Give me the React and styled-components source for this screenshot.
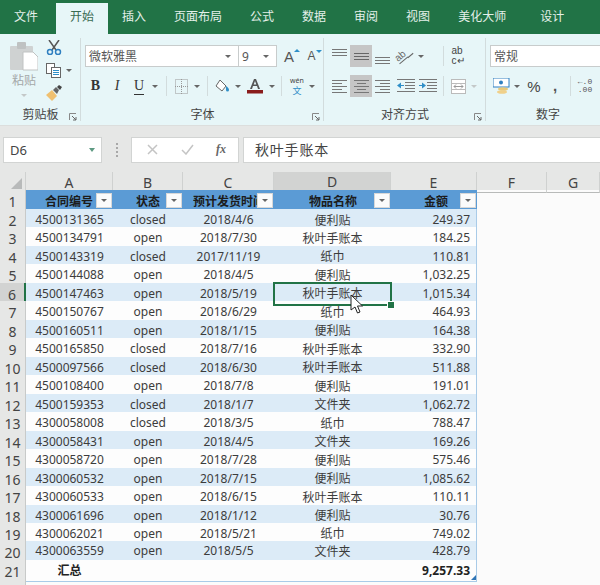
import React from 'react';
import styled, { createGlobalStyle } from 'styled-components';

const GlobalStyle = createGlobalStyle`
  html, body { margin: 0; padding: 0; background: #fbfbfb; }
  #root { width: 600px; height: 585px; overflow: hidden; }
  * { box-sizing: border-box; }
`;

const FONT = '"Noto Sans", "Noto Sans CJK SC", sans-serif';

const Page = styled.div`
  width: 600px;
  height: 585px;
  overflow: hidden;
  display: flex;
  flex-direction: column;
  font-family: ${FONT};
  color: #333;
`;

/* tabs */
const TabBar = styled.div`
  flex: 0 0 34px;
  display: flex;
  align-items: stretch;
  background: #217346;
  padding-top: 3px;
`;
const Tab = styled.div`
  padding: 0 14px;
  margin-left: ${(p) => p.$gap || 0}px;
  font-size: 12px;
  line-height: 28px;
  white-space: nowrap;
  color: ${(p) => (p.$active ? '#3a6b52' : '#e4f0ea')};
  background: ${(p) => (p.$active ? '#e7f6f8' : 'transparent')};
`;
const TabHint = styled.div`
  margin-left: 24px;
  padding-top: 7px;
`;

/* ribbon */
const Ribbon = styled.div`
  flex: 0 0 91px;
  display: flex;
  background: #e7f6f8;
  overflow: hidden;
`;
const Group = styled.div`
  position: relative;
  flex: 0 0 ${(p) => p.$w}px;
  display: flex;
  flex-direction: column;
  padding: 11px 0 0 ${(p) => p.$pad || 0}px;
  &::after {
    content: '';
    position: absolute;
    right: 0;
    top: 4px;
    bottom: 4px;
    width: 1px;
    background: ${(p) => (p.$last ? 'transparent' : '#d2dcdd')};
  }
`;
const Rows = styled.div`
  display: flex;
  flex-direction: column;
  gap: 8px;
`;
const ToolRow = styled.div`
  display: flex;
  align-items: center;
  height: 22px;
`;
const Cell = styled.div`
  flex: 0 0 ${(p) => p.$w}px;
  height: 22px;
  display: flex;
  align-items: center;
  justify-content: center;
  background: ${(p) => (p.$on ? '#c6c6c6' : 'transparent')};
`;
const Caret = styled.span`
  width: 0;
  height: 0;
  border-left: 3px solid transparent;
  border-right: 3px solid transparent;
  border-top: 3px solid ${(p) => (p.$faint ? '#c4c8c8' : '#666')};
`;
const Sep = styled.span`
  width: 1px;
  height: 20px;
  background: #d2dcdd;
`;
const Combo = styled.div`
  flex: 0 0 ${(p) => p.$w}px;
  height: 22px;
  display: flex;
  align-items: center;
  justify-content: space-between;
  padding: 0 7px 0 3px;
  background: #fff;
  border: 1px solid #c8cccc;
  margin-left: ${(p) => (p.$join ? -1 : 0)}px;
  font-size: 12px;
  color: #555;
`;
const GroupLabel = styled.div`
  position: absolute;
  left: 0;
  right: 0;
  bottom: 1px;
  height: 18px;
  font-size: 12px;
  line-height: 18px;
  text-align: center;
  color: #444;
`;
const Launcher = styled.svg`
  position: absolute;
  right: 4px;
  bottom: 4px;
`;
const GrowA = styled.span`
  position: relative;
  font-family: "Liberation Sans", sans-serif;
  font-size: ${(p) => p.$size}px;
  color: #555;
`;
const GrowMark = styled.span`
  position: absolute;
  right: -6px;
  top: 1px;
  width: 0;
  height: 0;
  border-left: 3px solid transparent;
  border-right: 3px solid transparent;
  ${(p) => (p.$down ? 'border-top: 3px solid #2f8fc8;' : 'border-bottom: 3px solid #2f8fc8;')}
`;
const StyleLetter = styled.span`
  font-family: "Liberation Serif", "Liberation Sans", sans-serif;
  font-size: 14px;
  line-height: 16px;
  color: #333;
  font-weight: ${(p) => (p.$bold ? 700 : 400)};
  font-style: ${(p) => (p.$italic ? 'italic' : 'normal')};
  border-bottom: ${(p) => (p.$under ? '1.5px solid #333' : 'none')};
`;
const PasteCol = styled.div`
  flex: 0 0 43px;
  display: flex;
  flex-direction: column;
  align-items: center;
  padding: 0 0 0 5px;
`;
const PasteText = styled.div`
  font-size: 12px;
  line-height: 16px;
  margin-top: 2px;
  margin-bottom: 5px;
  color: #a4a8a8;
`;
const ClipBody = styled.div`
  display: flex;
  margin-top: -3px;
`;
const ClipTools = styled.div`
  display: flex;
  flex-direction: column;
  gap: 7px;
  margin-top: -3px;
`;
const ClipTool = styled.div`
  display: flex;
  align-items: center;
  gap: 5px;
  height: 16px;
  padding-left: 3px;
`;
const Wen = styled.span`
  display: flex;
  flex-direction: column;
  align-items: center;
  line-height: 9px;
  font-size: 7px;
  color: #444;
  & > b { font-weight: 400; font-size: 9px; color: #2f8fc8; line-height: 11px; }
`;
const WrapText = styled.span`
  display: flex;
  flex-direction: column;
  font-family: "Liberation Sans", sans-serif;
  font-size: 10px;
  line-height: 10px;
  color: #444;
`;
const OrientText = styled.span`
  display: inline-block;
  font-family: "Liberation Sans", sans-serif;
  font-size: 10px;
  line-height: 10px;
  color: #666;
  border-bottom: 1px solid #666;
  transform: rotate(-40deg);
`;
const OrientArrow = styled.span`
  width: 7px;
  height: 1px;
  margin: 0 0 2px 1px;
  background: #666;
  transform: rotate(-40deg);
`;
const Percent = styled.span`
  font-family: "Liberation Sans", sans-serif;
  font-size: 15px;
  color: #444;
`;
const Comma = styled.span`
  font-family: "Liberation Sans", sans-serif;
  font-size: 15px;
  font-weight: 700;
  line-height: 10px;
  color: #555;
`;
const Decimal = styled.span`
  display: flex;
  flex-direction: column;
  align-items: flex-end;
  font-family: "Liberation Mono", monospace;
  font-size: 8px;
  line-height: 8px;
  color: #555;
`;

/* formula bar */
const FormulaBar = styled.div`
  flex: 0 0 47px;
  display: flex;
  align-items: center;
  padding: 1px 0 0 3px;
  background: #e6e7e6;
  border-top: 1px solid #dcdedd;
`;
const NameBox = styled.div`
  flex: 0 0 99px;
  height: 26px;
  display: flex;
  align-items: center;
  justify-content: space-between;
  padding: 0 6px;
  background: #fff;
  border: 1px solid #d2d4d3;
  font-size: 13px;
  color: #444;
`;
const NameCaret = styled.span`
  width: 0;
  height: 0;
  border-left: 3px solid transparent;
  border-right: 3px solid transparent;
  border-top: 4px solid #5d9a82;
`;
const Grip = styled.div`
  flex: 0 0 29px;
  display: flex;
  flex-direction: column;
  align-items: center;
  gap: 2px;
  & > i { width: 2px; height: 2px; background: #a8a8a8; }
`;
const FxBox = styled.div`
  flex: 0 0 106px;
  height: 26px;
  display: grid;
  grid-template-columns: 36px 34px 34px;
  align-items: center;
  justify-items: center;
  padding-left: 2px;
  background: #fff;
  border: 1px solid #d2d4d3;
`;
const FxText = styled.span`
  font-family: "Liberation Serif", serif;
  font-style: italic;
  font-weight: 700;
  font-size: 12px;
  color: #666;
`;
const FormulaInput = styled.div`
  flex: 1;
  height: 26px;
  margin-left: 4px;
  padding-left: 11px;
  background: #fff;
  border: 1px solid #d2d4d3;
  border-right: none;
  font-size: 14px;
  letter-spacing: 0.8px;
  line-height: 23px;
  color: #444;
`;

/* sheet */
const COLS = '26px 87px 70px 91px 117px 86px 70px 53px';
const Sheet = styled.div`
  position: relative;
  flex: 1;
  overflow: hidden;
  background: #fbfbfb;
`;
const HeadRow = styled.div`
  display: grid;
  grid-template-columns: ${COLS};
  height: 18px;
  background: #e6e7e6;
`;
const Corner = styled.div`
  display: flex;
  align-items: flex-end;
  justify-content: flex-end;
  padding: 0 3px 3px 0;
  border-right: 1px solid #cfd1d0;
  border-bottom: 1px solid #b8bab9;
`;
const ColHead = styled.div`
  display: flex;
  align-items: center;
  justify-content: center;
  font-size: 14px;
  color: #444;
  background: ${(p) => (p.$on ? '#d2d3d2' : 'transparent')};
  border-right: 1px solid #cfd1d0;
  border-bottom: ${(p) => (p.$on ? '2px solid #217346' : '1px solid #b8bab9')};
`;
const Row = styled.div`
  display: grid;
  grid-template-columns: ${COLS};
  height: ${(p) => p.$h || 18.47}px;
`;
const RowHead = styled.div`
  display: flex;
  align-items: center;
  justify-content: center;
  padding-top: 2px;
  font-size: 14px;
  color: #444;
  background: ${(p) => (p.$on ? '#d2d3d2' : '#e6e7e6')};
  border-right: ${(p) => (p.$on ? '2px solid #217346' : '1px solid #c8cac9')};
  border-bottom: 1px solid #cfd1d0;
`;
const Td = styled.div`
  position: relative;
  display: flex;
  align-items: center;
  justify-content: ${(p) => (p.$right ? 'flex-end' : 'center')};
  padding-right: ${(p) => (p.$right ? 6 : 0)}px;
  font-size: 12px;
  font-weight: ${(p) => (p.$bold ? 700 : 400)};
  white-space: nowrap;
  color: ${(p) => (p.$bold ? '#222' : '#3c3c3c')};
  background: ${(p) => (p.$band ? '#dcebf7' : '#fdfdfd')};
  border-bottom: 1px solid #a9cbe8;
  ${(p) => p.$right && 'border-right: 1px solid #a9cbe8;'}
  ${(p) => p.$double && 'border-bottom: 3px double #8fbbe2;'}
`;
const Th = styled.div`
  display: flex;
  align-items: center;
  overflow: hidden;
  padding-left: ${(p) => p.$pad}px;
  padding-right: 1px;
  background: #5b9bd5;
  font-size: 12px;
  font-weight: 700;
  white-space: nowrap;
  color: #1c1c1c;
  border-bottom: 1px solid #a9cbe8;
`;
const ThText = styled.span`
  flex: 1;
  min-width: 0;
  overflow: hidden;
`;
const Filter = styled.span`
  flex: 0 0 16px;
  height: 15px;
  display: flex;
  align-items: center;
  justify-content: center;
  background: #fbfbfb;
  border: 1px solid #d8d8d8;
`;
const Selection = styled.div`
  position: absolute;
  left: -1px;
  right: -1px;
  top: -1px;
  bottom: -2px;
  border: 2px solid #217346;
  z-index: 2;
  &::after {
    content: '';
    position: absolute;
    right: -4px;
    bottom: -4px;
    width: 6px;
    height: 6px;
    background: #217346;
    outline: 1px solid #fff;
  }
`;
const Pointer = styled.svg`
  position: absolute;
  left: 76px;
  top: 11px;
  z-index: 3;
`;
const ResizeMark = styled.span`
  position: absolute;
  right: 0;
  bottom: 1px;
  width: 0;
  height: 0;
  border-left: 5px solid transparent;
  border-bottom: 5px solid #2f75b5;
`;

const Lines = ({ ys, xs, w = 15, color = '#777', h = 16 }) => (
  <svg width={w} height={h} viewBox={`0 0 ${w} ${h}`}>
    {ys.map((y, i) => (
      <rect key={y} x={xs ? xs[i % xs.length][0] : 0} y={y} width={xs ? xs[i % xs.length][1] : w} height="1" fill={color} />
    ))}
  </svg>
);

const ParaIcon = ({ mode }) => {
  const long = [0, 15];
  const variants = {
    left: [long, [0, 10]],
    center: [long, [3, 9]],
    right: [long, [5, 10]],
  };
  return <Lines ys={[2, 5, 8, 11, 14]} xs={variants[mode]} />;
};

const IndentIcon = ({ flip }) => (
  <svg width="18" height="14" viewBox="0 0 18 14">
    <g fill="#777">
      <rect x="0" y="0" width="18" height="1" />
      <rect x="8" y="3" width="10" height="1" />
      <rect x="8" y="6" width="10" height="1" />
      <rect x="8" y="9" width="10" height="1" />
      <rect x="0" y="12" width="18" height="1" />
    </g>
    <path d={flip ? 'M0 6h3V3.5L7 6.500 3 9.500V7H0z' : 'M7 6H4V3.500L0 6.500 4 9.500V7h3z'} fill="#2f8fc8" />
  </svg>
);

const PasteIcon = () => (
  <svg width="28" height="29" viewBox="0 0 28 29">
    <rect x="0" y="4" width="23" height="24" rx="1" fill="#cfd2d2" />
    <rect x="7" y="0" width="9" height="7" rx="1" fill="#bfc2c2" />
    <path d="M13 10h10l5 5v13H13z" fill="#fff" stroke="#c0c3c3" />
  </svg>
);

const ScissorsIcon = () => (
  <svg width="16" height="15" viewBox="0 0 16 15">
    <path d="M3 0l7 10M13 0L6 10" stroke="#555" strokeWidth="1.500" fill="none" />
    <circle cx="4" cy="12" r="2.500" fill="none" stroke="#2f7fc0" strokeWidth="1.500" />
    <circle cx="12" cy="12" r="2.500" fill="none" stroke="#2f7fc0" strokeWidth="1.500" />
  </svg>
);

const CopyIcon = () => (
  <svg width="15" height="15" viewBox="0 0 15 15">
    <rect x="0.500" y="0.500" width="8" height="10" fill="#fff" stroke="#666" />
    <rect x="5.500" y="4.500" width="9" height="10" fill="#fff" stroke="#666" />
    <path d="M7 7.500h6M7 9.500h6M7 11.500h6" stroke="#2f8fc8" />
  </svg>
);

const BrushIcon = () => (
  <svg width="16" height="16" viewBox="0 0 16 16">
    <path d="M0 10l6-5 5 6-5 5z" fill="#f0c070" />
    <path d="M7 5l3-3 3 3-2 4z" fill="#666" />
    <path d="M11 2l2-2 3 2-2 3z" fill="#444" />
  </svg>
);

const BorderIcon = () => (
  <svg width="13" height="15" viewBox="0 0 13 15">
    <rect x="0.500" y="0.500" width="12" height="14" fill="none" stroke="#999" strokeDasharray="1 1" />
    <path d="M6.500 0v15M0 7.500h13" stroke="#999" strokeDasharray="1 1" />
  </svg>
);

const BucketIcon = () => (
  <svg width="15" height="14" viewBox="0 0 15 14">
    <path d="M5 1l6 6-4 5L1 7z" fill="#fff" stroke="#666" />
    <path d="M11 7c2 1 3 3 3 4a1.500 1.500 0 0 1-3 0z" fill="#2f8fc8" />
  </svg>
);

const FontColorIcon = () => (
  <svg width="16" height="15" viewBox="0 0 16 15">
    <path d="M3 10L7 0h2l4 10h-2l-1-3H6l-1 3zM6.700 5.500h2.600L8 2z" fill="#555" />
    <rect x="0" y="11" width="16" height="3.500" fill="#8a1c1c" />
  </svg>
);

const MergeIcon = () => (
  <svg width="15" height="15" viewBox="0 0 15 15">
    <rect x="0.500" y="0.500" width="14" height="14" fill="#fff" stroke="#bbb" />
    <path d="M0 4.500h15M0 10.500h15" stroke="#bbb" />
    <path d="M3 7.500h9M3 7.500l2-2M3 7.500l2 2M12 7.500l-2-2M12 7.500l-2 2" stroke="#999" fill="none" />
  </svg>
);

const CurrencyIcon = () => (
  <svg width="17" height="17" viewBox="0 0 17 17">
    <rect x="0" y="0" width="16" height="9" fill="#fff" stroke="#2f7fc0" />
    <circle cx="8" cy="4.500" r="2" fill="#2f7fc0" />
    <ellipse cx="10" cy="11" rx="5" ry="1.800" fill="#e8c878" />
    <ellipse cx="9" cy="14" rx="5" ry="1.800" fill="#f0d08a" />
  </svg>
);

const CornerMark = () => (
  <svg width="11" height="11" viewBox="0 0 11 11">
    <path d="M11 0v11H0z" fill="#b8baba" />
  </svg>
);

const LauncherIcon = () => (
  <Launcher width="8" height="8" viewBox="0 0 8 8">
    <path d="M0.500 7V0.500H7" fill="none" stroke="#888" />
    <path d="M3 3l4 4M7 4v3H4" fill="none" stroke="#666" />
  </Launcher>
);

const BulbIcon = () => (
  <svg width="12" height="17" viewBox="0 0 12 17">
    <path d="M6 1a5 5 0 0 0-3 9v3h6v-3a5 5 0 0 0-3-9zM4 15h4" fill="none" stroke="#dcebe4" />
  </svg>
);

const FilterButton = () => (
  <Filter><Caret /></Filter>
);

const rows = [
  ['4500131365', 'closed', '2018/4/6', '便利贴', '249.37'],
  ['4500134791', 'open', '2018/7/30', '秋叶手账本', '184.25'],
  ['4500143319', 'closed', '2017/11/19', '纸巾', '110.81'],
  ['4500144088', 'open', '2018/4/5', '便利贴', '1,032.25'],
  ['4500147463', 'open', '2018/5/19', '秋叶手账本', '1,015.34'],
  ['4500150767', 'open', '2018/6/29', '纸巾', '464.93'],
  ['4500160511', 'open', '2018/1/15', '便利贴', '164.38'],
  ['4500165850', 'closed', '2018/7/16', '秋叶手账本', '332.90'],
  ['4500097566', 'closed', '2018/6/30', '秋叶手账本', '511.88'],
  ['4500108400', 'open', '2018/7/8', '便利贴', '191.01'],
  ['4500159353', 'closed', '2018/1/7', '文件夹', '1,062.72'],
  ['4300058008', 'closed', '2018/3/5', '纸巾', '788.47'],
  ['4300058431', 'open', '2018/4/5', '文件夹', '169.26'],
  ['4300058720', 'open', '2018/7/28', '便利贴', '575.46'],
  ['4300060532', 'open', '2018/7/15', '便利贴', '1,085.62'],
  ['4300060533', 'open', '2018/6/15', '秋叶手账本', '110.11'],
  ['4300061696', 'open', '2018/1/12', '便利贴', '30.76'],
  ['4300062021', 'open', '2018/5/21', '纸巾', '749.02'],
  ['4300063559', 'open', '2018/5/5', '文件夹', '428.79'],
];

const tabs = ['开始', '插入', '页面布局', '公式', '数据', '审阅', '视图', '美化大师'];

const App = () => (
  <Page>
    <GlobalStyle />
    <TabBar>
      <Tab>文件</Tab>
      {tabs.map((t, i) => (
        <Tab key={t} $active={i === 0} $gap={i === 0 ? 4 : 0}>{t}</Tab>
      ))}
      <Tab $gap={6}>设计</Tab>
      <TabHint><BulbIcon /></TabHint>
    </TabBar>

    <Ribbon>
      <Group $w={81}>
        <ClipBody>
          <PasteCol>
            <PasteIcon />
            <PasteText>粘贴</PasteText>
            <Caret $faint />
          </PasteCol>
          <ClipTools>
            <ClipTool><ScissorsIcon /></ClipTool>
            <ClipTool><CopyIcon /><Caret /></ClipTool>
            <ClipTool><BrushIcon /></ClipTool>
          </ClipTools>
        </ClipBody>
        <GroupLabel>剪贴板</GroupLabel>
        <LauncherIcon />
      </Group>

      <Group $w={243} $pad={4}>
        <Rows>
          <ToolRow>
            <Combo $w={154}>微软雅黑<Caret /></Combo>
            <Combo $w={39} $join>9<Caret /></Combo>
            <Cell $w={24}><GrowA $size={15}>A<GrowMark /></GrowA></Cell>
            <Cell $w={21}><GrowA $size={12}>A<GrowMark $down /></GrowA></Cell>
          </ToolRow>
          <ToolRow>
            <Cell $w={21}><StyleLetter $bold>B</StyleLetter></Cell>
            <Cell $w={22}><StyleLetter $italic>I</StyleLetter></Cell>
            <Cell $w={22}><StyleLetter $under>U</StyleLetter></Cell>
            <Cell $w={10}><Caret /></Cell>
            <Cell $w={12}><Sep /></Cell>
            <Cell $w={18}><BorderIcon /></Cell>
            <Cell $w={13}><Caret /></Cell>
            <Cell $w={8}><Sep /></Cell>
            <Cell $w={22}><BucketIcon /></Cell>
            <Cell $w={10}><Caret /></Cell>
            <Cell $w={24}><FontColorIcon /></Cell>
            <Cell $w={9}><Caret /></Cell>
            <Cell $w={10}><Sep /></Cell>
            <Cell $w={22}><Wen>wén<b>文</b></Wen></Cell>
            <Cell $w={8}><Caret /></Cell>
          </ToolRow>
        </Rows>
        <GroupLabel>字体</GroupLabel>
        <LauncherIcon />
      </Group>

      <Group $w={162} $pad={5}>
        <Rows>
          <ToolRow>
            <Cell $w={21}><Lines ys={[1, 4, 7]} h={16} /></Cell>
            <Cell $w={22} $on><Lines ys={[5, 8, 11]} color="#666" /></Cell>
            <Cell $w={21}><Lines ys={[9, 12, 15]} /></Cell>
            <Cell $w={23}><OrientText>ab</OrientText><OrientArrow /></Cell>
            <Cell $w={9}><Caret /></Cell>
            <Cell $w={15} />
            <Cell $w={6}><Sep /></Cell>
            <Cell $w={24}><WrapText>ab<span>c↵</span></WrapText></Cell>
          </ToolRow>
          <ToolRow>
            <Cell $w={21}><ParaIcon mode="left" /></Cell>
            <Cell $w={22} $on><ParaIcon mode="center" /></Cell>
            <Cell $w={21}><ParaIcon mode="right" /></Cell>
            <Cell $w={26}><IndentIcon /></Cell>
            <Cell $w={18}><IndentIcon flip /></Cell>
            <Cell $w={3} />
            <Cell $w={6}><Sep /></Cell>
            <Cell $w={24}><MergeIcon /></Cell>
            <Cell $w={8}><Caret $faint /></Cell>
          </ToolRow>
        </Rows>
        <GroupLabel>对齐方式</GroupLabel>
        <LauncherIcon />
      </Group>

      <Group $w={114} $pad={4} $last>
        <Rows>
          <ToolRow>
            <Combo $w={120}>常规</Combo>
          </ToolRow>
          <ToolRow>
            <Cell $w={22}><CurrencyIcon /></Cell>
            <Cell $w={10}><Caret /></Cell>
            <Cell $w={24}><Percent>%</Percent></Cell>
            <Cell $w={18}><Comma>,</Comma></Cell>
            <Cell $w={12}><Sep /></Cell>
            <Cell $w={18}><Decimal><span>←.0</span><span>.00</span></Decimal></Cell>
          </ToolRow>
        </Rows>
        <GroupLabel>数字</GroupLabel>
      </Group>
    </Ribbon>

    <FormulaBar>
      <NameBox>D6<NameCaret /></NameBox>
      <Grip><i /><i /><i /><i /></Grip>
      <FxBox>
        <svg width="11" height="11" viewBox="0 0 11 11"><path d="M1 1l9 9M10 1l-9 9" stroke="#c4c4c4" strokeWidth="1.500" /></svg>
        <svg width="13" height="11" viewBox="0 0 13 11"><path d="M1 6l4 4 7-9" stroke="#c4c4c4" strokeWidth="1.500" fill="none" /></svg>
        <FxText>fx</FxText>
      </FxBox>
      <FormulaInput>秋叶手账本</FormulaInput>
    </FormulaBar>

    <Sheet>
      <HeadRow>
        <Corner><CornerMark /></Corner>
        {['A', 'B', 'C', 'D', 'E', 'F', 'G'].map((c) => (
          <ColHead key={c} $on={c === 'D'}>{c}</ColHead>
        ))}
      </HeadRow>
      <Row $h={19}>
        <RowHead>1</RowHead>
        <Th $pad={19}><ThText>合同编号</ThText><FilterButton /></Th>
        <Th $pad={23}><ThText>状态</ThText><FilterButton /></Th>
        <Th $pad={10}><ThText>预计发货时间</ThText><FilterButton /></Th>
        <Th $pad={35}><ThText>物品名称</ThText><FilterButton /></Th>
        <Th $pad={33}><ThText>金额</ThText><FilterButton /></Th>
      </Row>
      {rows.map((r, i) => {
        const band = i % 2 === 0;
        const selected = i === 4;
        return (
          <Row key={r[0]}>
            <RowHead $on={selected}>{i + 2}</RowHead>
            <Td $band={band} $double={i === 18}>{r[0]}</Td>
            <Td $band={band} $double={i === 18}>{r[1]}</Td>
            <Td $band={band} $double={i === 18}>{r[2]}</Td>
            <Td $band={band} $double={i === 18}>
              {r[3]}
              {selected && <Selection />}
              {selected && (
                <Pointer width="13" height="20" viewBox="0 0 13 20">
                  <path d="M1 1v15l4-3 2.500 6 2.500-1-2.500-6h5z" fill="#fff" stroke="#222" />
                </Pointer>
              )}
            </Td>
            <Td $band={band} $right $double={i === 18}>{r[4]}</Td>
          </Row>
        );
      })}
      <Row>
        <RowHead>21</RowHead>
        <Td $bold>汇总</Td>
        <Td />
        <Td />
        <Td />
        <Td $bold $right>9,257.33<ResizeMark /></Td>
      </Row>
      <Row>
        <RowHead>22</RowHead>
      </Row>
    </Sheet>
  </Page>
);

export default App;
